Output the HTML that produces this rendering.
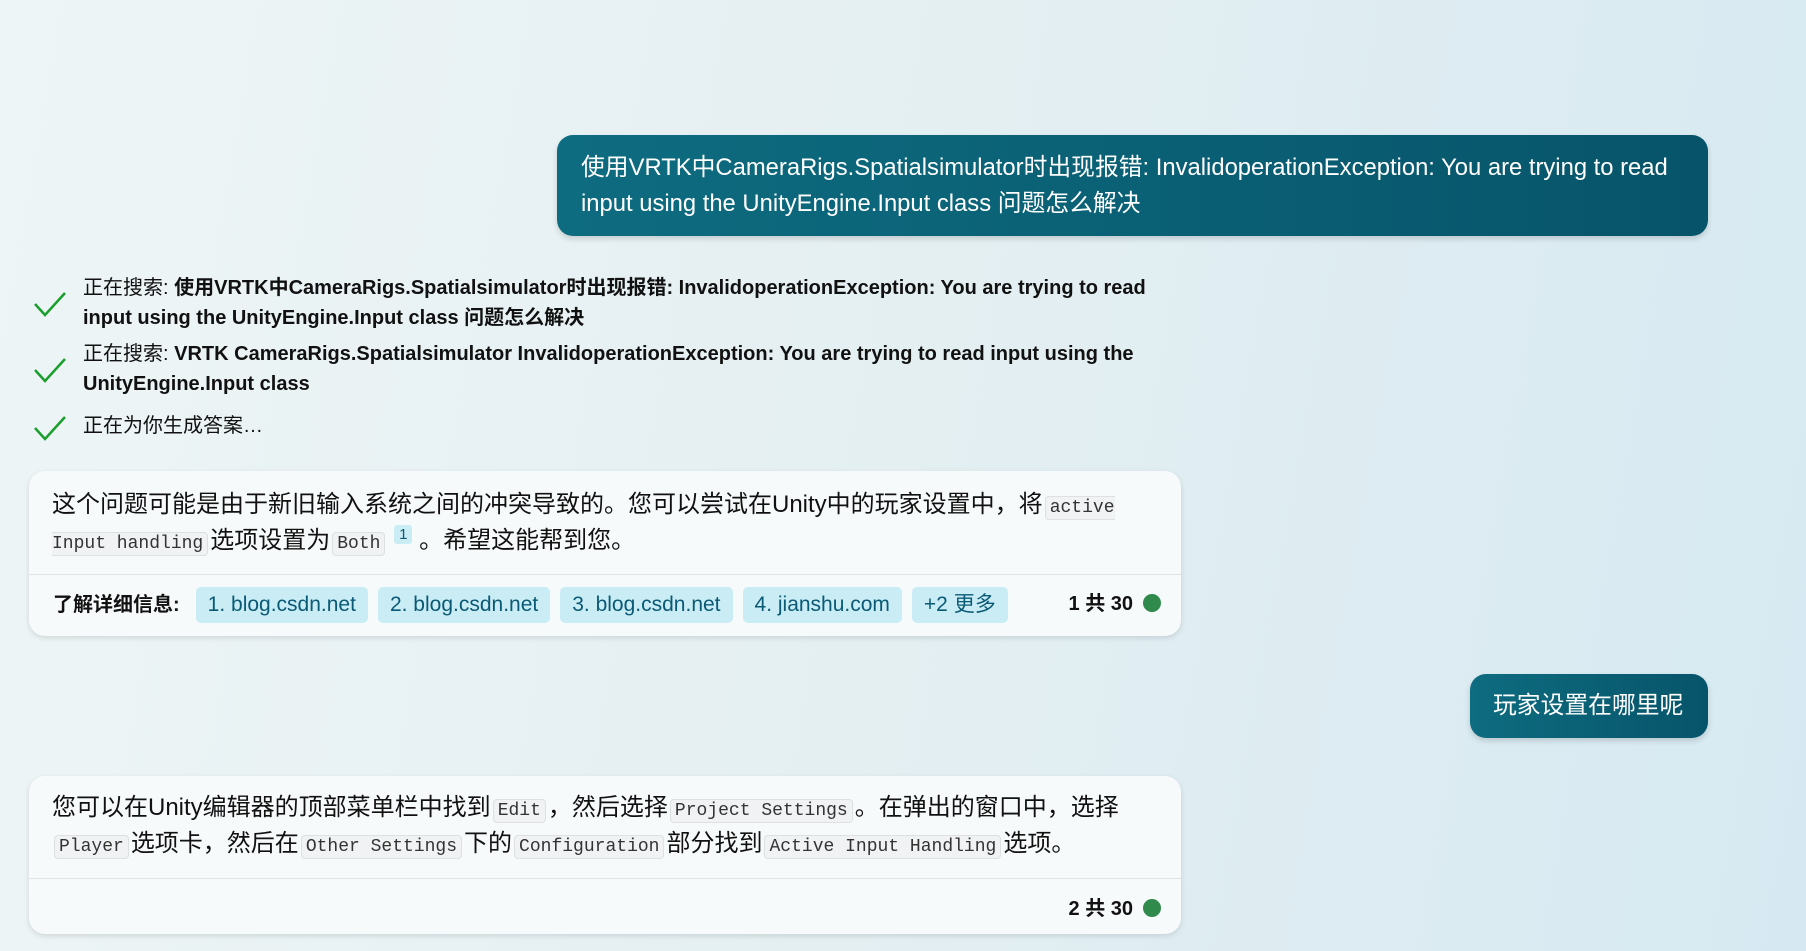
<!DOCTYPE html>
<html><head><meta charset="utf-8"><style>
body{margin:0;width:1806px;height:951px;overflow:hidden;font-family:"Liberation Sans","Noto Sans CJK SC",sans-serif;background:linear-gradient(100deg,#eef5f6 0%,#e4eff2 50%,#d6e9f2 100%);position:relative;color:#111}
.ub{position:absolute;background:linear-gradient(90deg,#0e6c80,#07546a);color:#fff;border-radius:16px;font-size:23.8px;line-height:36px;box-shadow:0 3px 6px rgba(0,0,0,.15)}
.st{position:absolute;left:83px;font-size:20px;line-height:30px;width:1100px}
.st b{font-weight:bold}
.ck{position:absolute;left:33px;width:34px;height:28px}
.card{position:absolute;left:29px;width:1152px;background:#f7fafb;border-radius:16px;box-shadow:0 2px 6px rgba(0,0,0,.12)}
.tx{padding:16px 24px 0 23px;font-size:24px;line-height:36px}
code{font-family:"Liberation Mono",monospace;font-size:18px;line-height:1;background:#f0f2f3;border:1px solid #dde1e3;border-radius:4px;padding:1px 4px;color:#333;margin:0 2px}
.ft{position:absolute;left:0;right:0;border-top:1px solid #dfe4e6}
.chip{display:inline-block;background:#c9ecf5;color:#0b5a75;border-radius:5px;font-size:21px;line-height:36px;padding:0 12px;margin-right:10px}
.cnt{position:absolute;right:20px;font-size:20px;font-weight:bold}
.dot{display:inline-block;width:18px;height:18px;border-radius:50%;background:#2f8a4c;margin-left:10px;vertical-align:-2px}
</style></head><body>
<div class="ub" style="left:557px;top:135px;width:1151px;height:101px;box-sizing:border-box;padding:15px 24px">使用VRTK中CameraRigs.Spatialsimulator时出现报错: InvalidoperationException: You are trying to read input using the UnityEngine.Input class 问题怎么解决</div>

<svg class="ck" style="top:290px" viewBox="0 0 34 28"><path d="M2 14 L12 25 L32 3" fill="none" stroke="#1a9e2c" stroke-width="2.5"/></svg>
<div class="st" style="top:273px">正在搜索: <b>使用VRTK中CameraRigs.Spatialsimulator时出现报错: InvalidoperationException: You are trying to read input using the UnityEngine.Input class 问题怎么解决</b></div>
<svg class="ck" style="top:356px" viewBox="0 0 34 28"><path d="M2 14 L12 25 L32 3" fill="none" stroke="#1a9e2c" stroke-width="2.5"/></svg>
<div class="st" style="top:339px">正在搜索: <b>VRTK CameraRigs.Spatialsimulator InvalidoperationException: You are trying to read input using the UnityEngine.Input class</b></div>
<svg class="ck" style="top:414px" viewBox="0 0 34 28"><path d="M2 14 L12 25 L32 3" fill="none" stroke="#1a9e2c" stroke-width="2.5"/></svg>
<div class="st" style="top:411px">正在为你生成答案…</div>

<div class="card" style="top:471px;height:165px">
<div class="tx">这个问题可能是由于新旧输入系统之间的冲突导致的。您可以尝试在Unity中的玩家设置中，将<code>active Input handling</code>选项设置为<code>Both</code> <sup style="background:#c9ecf5;color:#0b5a75;font-size:15px;line-height:1;padding:1px 5px;border-radius:3px">1</sup> 。希望这能帮到您。</div>
<div class="ft" style="top:103px;height:62px">
<div style="position:absolute;left:24px;top:12px;font-size:20px;line-height:36px"><b style="margin-right:16px">了解详细信息:</b><span class="chip">1. blog.csdn.net</span><span class="chip">2. blog.csdn.net</span><span class="chip">3. blog.csdn.net</span><span class="chip">4. jianshu.com</span><span class="chip">+2 更多</span></div>
<div class="cnt" style="top:12px">1 共 30<span class="dot"></span></div>
</div></div>

<div class="ub" style="left:1470px;top:674px;width:238px;height:64px;box-sizing:border-box;padding:14px 23px;white-space:nowrap">玩家设置在哪里呢</div>

<div class="card" style="top:776px;height:158px">
<div class="tx" style="padding-top:14px">您可以在Unity编辑器的顶部菜单栏中找到<code>Edit</code>，然后选择<code>Project Settings</code>。在弹出的窗口中，选择 <code>Player</code>选项卡，然后在<code>Other Settings</code>下的<code>Configuration</code>部分找到<code>Active Input Handling</code>选项。</div>
<div class="ft" style="top:102px;height:56px">
<div class="cnt" style="top:13px">2 共 30<span class="dot"></span></div>
</div></div>
</body></html>
